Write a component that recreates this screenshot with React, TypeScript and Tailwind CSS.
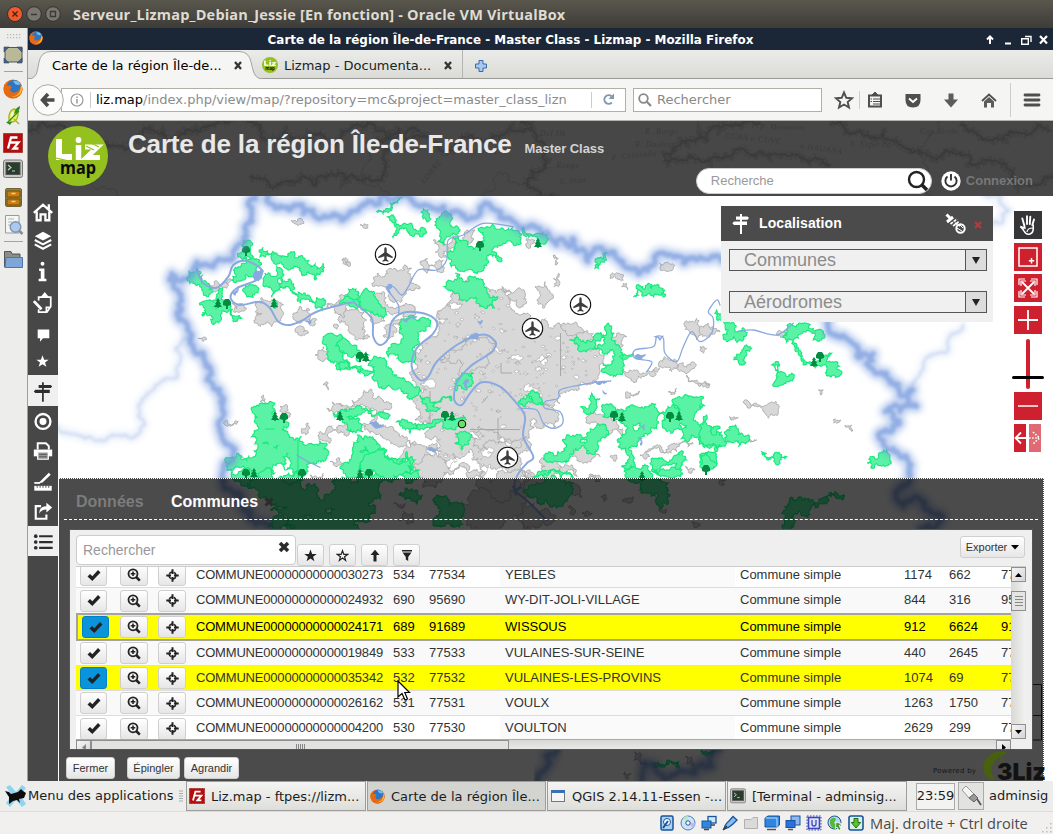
import React from "react";

type P = [number, number];
type Origin = { x: number; y: number; sx: number; sy: number };

const ORIGINS: Record<string, Origin> = {
  A: { x: 0, y: 190, sx: 3, sy: 3 },
  B: { x: 340, y: 190, sx: 3, sy: 3 },
  C: { x: 700, y: 190, sx: 3, sy: 3 },
  D: { x: 0, y: 470, sx: 2.958, sy: 3 },
  E: { x: 523, y: 470, sx: 2.958, sy: 3 },
  F: { x: 523, y: 630, sx: 2.958, sy: 3 },
};

function parse(src: string): P[] {
  let o = ORIGINS.A;
  const out: P[] = [];
  src.trim().split(/\s+/).forEach((t) => {
    if (ORIGINS[t]) {
      o = ORIGINS[t];
      return;
    }
    const [a, b] = t.split(",").map(Number);
    out.push([o.x + a / o.sx, o.y + b / o.sy]);
  });
  return out;
}

function rng(seed: number) {
  let s = seed * 7919 + 17;
  return () => {
    s = (s * 16807) % 2147483647;
    return s / 2147483647;
  };
}

function rough(src: string | P[], seed: number, amp = 0.3, closed = true): string {
  const pts = typeof src === "string" ? parse(src) : src;
  const r = rng(seed + 1);
  const out: P[] = [];
  const sub = (a: P, b: P) => {
    const dx = b[0] - a[0];
    const dy = b[1] - a[1];
    const len = Math.hypot(dx, dy);
    if (len < 2) {
      out.push(b);
      return;
    }
    const d = (r() - 0.5) * 2 * amp;
    const m: P = [(a[0] + b[0]) / 2 - dy * d, (a[1] + b[1]) / 2 + dx * d];
    sub(a, m);
    sub(m, b);
  };
  out.push(pts[0]);
  const n = closed ? pts.length : pts.length - 1;
  for (let i = 0; i < n; i++) sub(pts[i], pts[(i + 1) % pts.length]);
  return "M" + out.map((p) => p[0].toFixed(1) + " " + p[1].toFixed(1)).join("L") + (closed ? "Z" : "");
}

function smooth(src: string): string {
  const p = parse(src);
  let d = `M${p[0][0]} ${p[0][1]}`;
  for (let i = 0; i < p.length - 1; i++) {
    const a = p[Math.max(0, i - 1)];
    const b = p[i];
    const c = p[i + 1];
    const e = p[Math.min(p.length - 1, i + 2)];
    d += `C${(b[0] + (c[0] - a[0]) / 6).toFixed(1)} ${(b[1] + (c[1] - a[1]) / 6).toFixed(1)} ${(c[0] - (e[0] - b[0]) / 6).toFixed(1)} ${(c[1] - (e[1] - b[1]) / 6).toFixed(1)} ${c[0].toFixed(1)} ${c[1].toFixed(1)}`;
  }
  return d;
}

const FORESTS = [
  "A 715,190 725,165 745,150 750,185 760,200 725,205",
  "A 778,180 790,172 830,190 870,190 915,205 930,225 970,220 970,245 945,270 925,245 905,255 880,235 850,225 815,210 780,200",
  "A 695,270 700,240 730,220 780,228 770,260 730,270 705,278",
  "A 790,265 810,250 825,260 830,230 835,280 840,300 815,322 795,290",
  "A 730,305 755,285 775,300 760,322",
  "A 845,265 880,290 905,315 970,325 975,345 950,355 900,340 885,310 850,295",
  "A 560,268 590,235 605,280 640,305 625,320 605,300 585,280",
  "A 600,345 640,335 655,300 668,300 670,330 690,345 690,370 725,385 700,395 665,365 655,398 630,375 605,375 615,355",
  "A 820,350 825,330 832,340 832,352",
  "A 970,440 990,430 1030,460 1050,470 1050,490 1020,480 1050,520 1050,535 1010,515 985,500",
  "A 755,660 800,640 825,640 815,670 835,690 860,680 865,710 845,720 880,745 905,740 940,765 980,760 985,790 950,815 920,825 920,850 900,880 740,880 740,860 680,840 715,790 740,810 760,800 755,740 770,720 765,690",
  "A 1000,670 1040,660 1050,690 1020,685",
  "B 140,80 160,75 165,95 195,100 215,100 220,115 258,130 230,132 195,115 180,115 160,145 165,110",
  "B 285,95 305,70 335,80 345,110 355,130 325,140 315,165 300,130",
  "B 250,55 265,60 265,95",
  "B 110,65 150,38 185,22 155,48",
  "B 325,185 345,175 340,145 355,138 385,155 400,180 420,170 415,120 440,110 500,120 535,122 545,135 520,165 490,160 455,180 485,205 480,215 440,200 420,245 385,240 335,210",
  "B 545,115 590,130 620,155 590,165 555,130",
  "B 320,275 345,250 395,260 430,275 440,300 470,320 465,355 430,350 400,325 350,310",
  "B 25,310 55,305 60,320 90,305 115,340 140,375 130,385 90,365 60,325 25,330",
  "B 0,335 35,325 60,345 0,345",
  "B 180,405 200,385 250,382 268,390 262,410 235,440 215,515 195,515 145,500 145,480 160,460",
  "B 0,450 30,460 50,480 85,495 60,515 20,490 0,485",
  "B 0,515 40,530 70,550 95,550 90,515 115,505 155,540 170,555 200,575 235,590 235,615 200,610 165,600 125,590 100,570 60,550 0,535",
  "B 345,590 360,560 400,550 395,570 380,600 350,602",
  "B 240,615 270,635 330,618 335,632 280,640 300,655 265,665",
  "B 0,665 80,655 130,665 145,685 90,670 60,675 20,680 60,700 70,725 20,700 0,690",
  "B 170,695 250,700 310,690 345,690 370,675 380,690 360,710 310,705 270,715 210,730",
  "B 345,730 370,725 390,750 365,780 345,760",
  "B 35,800 40,770 90,740 110,755 140,780 130,800 200,785 225,810 220,835 180,830 190,850 240,865 160,860 140,820 100,800 80,815 60,835 90,865 20,865 0,835 25,820",
  "B 535,635 570,610 605,625 605,645 575,635 555,650",
  "B 880,320 890,285 925,280 935,295 975,300 975,320 930,310 895,300",
  "B 690,450 710,440 770,430 800,425 805,400 822,430 815,450 845,480 880,490 850,510 850,530 820,560 785,545 790,520 815,515 810,480 765,475 795,460 790,435 710,460",
  "B 765,235 765,210 800,190 800,210 775,235",
  "B 720,650 755,610 780,625 760,670 730,665",
  "B 615,810 625,790 680,770 680,735 740,730 800,715 805,735 775,765 740,790 700,780 650,815",
  "B 785,660 820,650 830,665 850,665 890,650 920,650 935,640 960,670 955,700 930,730 905,740 890,770 865,775 880,810 885,840 865,855 845,830 835,770 850,700 820,690 790,680",
  "B 955,675 1020,665 1015,620 1040,615 1090,625 1075,660 1060,690 1085,720 1140,715 1140,770 1100,770 1080,740 1055,735 1040,755 1000,725 970,715",
  "B 870,830 885,850 920,865 860,865",
  "B 930,820 980,815 1030,785 1040,810 1015,845 1010,820 970,825 950,850",
  "B 1080,820 1090,790 1130,800 1130,825 1100,840",
  "B 580,865 600,855 680,845 700,865",
  "C 50,360 75,385 100,395 105,420 140,435 130,450 70,440 85,420",
  "C 100,510 130,475 155,475 135,500 120,525",
  "C 215,525 235,515 245,545 275,550 245,585 222,590 235,560",
  "C 245,440 270,400 320,400 345,425 375,440 340,450 310,425 285,445 305,495 375,495 395,490 380,515 425,550 400,555 370,525 345,535 310,525 290,485 280,450",
  "C 0,710 20,675 20,705 65,725 80,760 50,785 10,760 0,750",
  "C 75,725 95,710 145,735 145,755 115,770 90,755",
  "C 0,795 20,790 50,820 20,840 0,830",
  "C 185,785 220,795 260,800 240,820 200,805",
  "C 510,800 535,795 550,780 570,805 550,825 515,835",
  "D 680,0 720,-5 880,0 895,30 870,70 830,95 790,80 740,55 700,35",
  "D 740,30 850,40 900,60 960,90 1040,40 1090,15 1180,30 1120,60 1090,100 1110,130 1060,150 1060,182 820,182 850,140 800,120 850,110 760,60",
  "D 1280,90 1330,105 1370,110 1365,140 1310,170 1280,165 1300,130",
  "D 1180,75 1230,60 1250,75 1200,90",
  "D 800,150 840,140 870,182 810,182",
  "D 1060,0 1240,0 1130,18 1080,20",
  "E 0,65 50,40 60,20 110,25 150,40 135,80 100,115 70,90 30,85",
  "E 300,0 370,0 410,30 430,60 430,100 405,115 395,70 350,40 330,40",
  "E 380,0 470,0 465,20 400,15",
  "E 765,130 775,110 860,105 950,75 945,90 850,135 795,140 800,165 770,178",
  "F 380,400 460,395 460,415 400,410",
  "F 525,360 575,360 540,380",
];

const GLADES = ["B 880,705 900,700 895,720 880,715", "B 1020,700 1040,705 1030,715", "A 790,760 800,755 805,765", "A 850,800 865,790 870,830 858,840", "B 180,820 200,800 195,815", "B 60,785 75,770 85,785", "A 820,770 835,765 830,775", "C 225,530 235,525 235,540", "B 565,625 575,620 580,632", "A 640,350 650,348 648,358", "B 720,755 740,748 735,760", "B 840,500 850,495 848,508", "D 960,120 990,115 980,130", "D 900,140 920,135 915,148"];

const TOWNS = [
  "B 330,320 400,310 440,290 500,300 510,350 560,370 595,400 640,415 720,420 760,430 790,520 760,580 720,580 690,600 660,640 610,640 640,715 590,715 575,690 570,780 540,830 560,865 430,865 420,820 340,790 330,830 295,820 300,770 270,700 225,690 225,640 260,600 215,560 215,500 280,440 290,390 315,350",
  "B 150,235 180,240 215,235 210,270 240,290 190,320 150,330 140,300 95,280 100,262 130,260",
  "B 100,315 130,305 175,345 215,345 225,355 180,370 110,400 95,360",
  "B 0,370 50,350 80,390 90,440 70,450 0,400",
  "B 160,390 185,385 160,440 150,445",
  "B 395,445 440,440 460,460 440,500 400,540 380,560 360,510 300,510 330,480",
  "B 240,215 310,210 310,240 260,250",
  "B 300,150 355,140 355,170 320,200 280,150",
  "B 585,290 615,275 625,300 630,330 610,355 600,320",
  "B 640,265 655,250 655,290 642,290",
  "B 640,195 655,205 645,225",
  "B 810,265 835,250 850,270",
  "B 845,290 860,280 862,300",
  "B 960,220 1000,235 975,240",
  "B 10,205 30,220 20,225",
  "B 60,105 85,105 75,115",
  "B 330,285 400,280 415,310 365,320",
  "B 660,410 700,400 735,425 710,440 680,430",
  "B 800,430 860,440 850,465 820,455",
  "B 790,545 870,540 930,545 960,535 940,560 890,575 860,560",
  "B 955,525 975,500 1000,510 1015,530 975,530",
  "B 1035,395 1070,385 1120,410 1090,430 1070,450 1045,420",
  "B 1040,555 1060,575 1110,585 1080,590 1045,575",
  "B 1015,525 1060,515 1065,530 1030,545",
  "B 985,605 1010,595 1005,612",
  "B 860,605 900,605 870,625",
  "B 0,640 60,625 130,630 155,650 100,655 40,650 0,670",
  "B 70,700 150,710 200,740 240,770 290,760 290,790 240,780 200,755 140,750 90,730",
  "B 180,800 290,800 330,820 320,850 250,865 190,845",
  "B 390,730 450,720 500,750 560,740 520,775 480,740 440,780 400,770",
  "B 700,755 770,770 780,800 740,820 700,800",
  "B 740,680 830,700 850,740 780,730 740,700",
  "B 740,870 760,860 780,875",
  "B 900,795 960,780 1010,760 1040,735 1060,760 1010,785 930,800",
  "B 810,800 830,795 825,815",
  "B 1035,830 1065,840 1050,850",
  "B 560,145 585,150 570,175",
  "B 375,125 405,120 400,145 375,160",
  "B 485,290 545,300 560,335 510,325",
  "A 873,92 900,85 912,100 885,102",
  "A 1025,210 1050,215 1048,230",
  "A 610,255 620,285 665,285 690,265 680,295 640,300 610,280",
  "A 695,340 730,345 740,355 700,365",
  "A 765,345 810,335 845,360 845,380 815,410 770,400 785,370",
  "A 885,370 925,355 930,375 885,390",
  "A 885,425 910,410 925,430 895,435",
  "A 925,395 950,390 945,405",
  "A 1000,345 1050,325 1045,345 1030,385 1005,370 980,350",
  "A 1000,405 1015,405 1010,418",
  "A 945,495 970,470 985,490 955,508",
  "A 595,445 620,445 610,455",
  "A 970,585 980,575 985,600",
  "A 780,635 790,615 797,638",
  "A 840,650 855,645 870,680 850,670",
  "A 670,698 715,695 710,703 675,705",
  "A 905,715 925,700 925,725 905,730",
  "A 990,815 1020,805 1030,820 1000,825",
  "A 955,735 980,715 1010,720 985,730 990,760 965,750",
  "A 930,855 970,850 965,868 935,865",
  "A 1010,715 1048,725 1040,740 1015,730",
  "A 980,655 1020,645 1045,650 1015,675",
  "C 0,410 45,415 60,425 20,440 0,430",
  "C 230,435 255,420 280,430 265,455",
  "C 0,470 20,475 10,490",
  "C 0,580 30,585 10,592",
  "C 132,632 160,645 200,645 215,635 235,665 205,685 185,655 150,655",
  "C 88,680 115,683 100,690",
  "C 355,600 370,600 362,615",
  "C 400,690 422,690 410,700",
  "C 435,705 455,705 455,725",
  "C 140,740 170,750 150,757",
  "C 60,870 78,870 70,888",
  "D 1350,100 1400,60 1460,45 1568,30 1568,178 1400,178 1370,140",
  "D 1165,100 1200,100 1190,112",
  "D 905,90 935,75 950,100 920,125",
  "D 1180,150 1220,130 1220,160",
  "D 1220,10 1350,0 1568,0 1568,50 1450,40 1300,35",
  "E 0,0 150,0 160,20 70,30 60,60 0,60",
  "E 0,110 60,120 90,135 50,170 0,175",
  "E 135,40 170,60 175,80 150,75",
  "E 175,125 205,130 190,140",
  "E 230,80 245,75 240,95",
  "E 295,95 325,80 325,90",
  "E 140,105 155,120 145,135",
  "E 500,155 525,160 515,172",
  "E 195,15 225,15 220,35",
  "E 405,110 425,120 415,130",
  "F 330,365 350,370 365,400 350,405",
  "F 480,380 500,380 505,405",
  "F 300,425 320,430 310,448",
];

const RIVERS = [
  "A 590,240 610,280 650,293 685,260 700,225 740,213 785,240 770,270 710,295 692,325 720,345 780,335 810,355 835,395 870,405 910,390 950,365 1050,338 B 50,345 95,385 100,440 120,465 145,445 155,395 190,368 250,370 290,395 280,430 230,475 215,530 240,570 265,560 290,515 350,465 400,440 440,435 468,460 450,490 390,530 350,580 343,630 365,645 390,610 425,577 480,590 530,640 555,680 550,740 580,800 560,820 530,860 525,900 E 10,90 70,150",
];
const STREAMS = [
  "B 175,375 175,345 145,300 160,290 185,315 205,290 235,240 290,240 320,210 325,150 370,135 430,100 520,110",
  "B 545,655 590,660 610,700 640,715 668,700 660,665 615,655 615,635 655,625 660,600 720,585 780,575 812,573",
  "B 920,545 935,515 885,505 885,480 940,470 950,440 970,445 975,490 1010,515 1030,470 1055,425 1080,455 1115,430 1120,385 1105,365 1130,330 1140,345",
  "C 115,425 160,420 230,435 280,400",
  "A 890,795 925,815 960,832",
];
const PONDS = ["B 140,290 155,285 150,310", "B 370,580 385,570 380,595", "B 390,440 415,435 410,448", "B 190,390 230,380 200,395", "B 90,700 130,705 100,708", "B 265,775 290,780 270,782", "B 905,710 912,705 912,720", "B 898,745 905,745 903,765", "B 885,498 915,495 905,505", "B 765,575 800,575 780,583", "A 700,310 715,295 705,315", "A 920,395 930,390 928,402", "B 415,395 428,392 420,405", "B 945,440 970,437 960,450", "B 790,605 800,610 795,612", "D 1515,50 1540,45 1525,75", "A 760,260 788,240 775,272"];

const BORDERS = [
  "A 765,10 755,60 745,100 740,135 715,165 700,195 680,210 650,215 620,225 590,215 575,245 550,265 515,250 508,270 530,300 545,330 530,370 560,400 575,440 580,470 610,490 630,530 620,570 660,600 665,650 655,700 665,740 705,775 700,800 670,830 665,860 D 665,30 690,70 715,110 745,150 800,170",
  "A 800,10 845,50 890,45 940,60 990,80 1050,65 B 60,50 110,45 180,20 220,35 280,55 330,75 380,90 400,85 420,50 440,40 460,55 480,85 520,95 570,105 620,125 650,165 690,170 700,145 720,180 745,215 790,185 830,205 860,235 900,250 940,225 975,190 1030,220 1080,200 1140,205 C 180,160 300,150 385,395 395,430 440,445 470,495 520,490 525,550 570,580 600,610 640,600 650,650 600,665 555,665 600,700 555,720 545,750 580,775 620,800 625,850 E 1145,30 1110,60 1125,110 1190,100 1240,145 1200,165 1170,180",
  "F 110,360 60,420 50,460",
  "F 590,360 560,410 510,430 470,420 440,435 400,430 355,400 350,460",
];
const FAINT = [
  "A 175,705 200,730 260,745 320,750 390,745 435,705 415,650 440,610 480,580 530,565 540,520 525,480 545,455 575,450",
  "C 850,10 930,60 900,100 860,120 780,150",
  "C 790,400 760,430 735,490 690,500 660,550 640,590",
];

const TREES: P[] = [[218, 303], [227, 304], [275, 416], [284, 418], [340, 416], [360, 357], [366, 357], [445, 416], [452, 416], [614, 416], [622, 417], [670, 417], [679, 416], [246, 474], [254, 473], [302, 474], [360, 474], [369, 474], [642, 476], [480, 246], [538, 243], [820, 357], [814, 362], [246, 251], [274, 303], [706, 470]];
const PLANES: P[] = [[385.5, 254.5], [580.5, 304.5], [532.5, 328.5], [507.5, 457.5]];

const urbanHoles = (() => {
  const r = rng(42);
  const out: string[] = [];
  for (let i = 0; i < 330; i++) {
    const x = 412 + r() * 188;
    const y = 292 + r() * 185;
    const s = 0.5 + r() * r() * 2.6;
    out.push(rough([[x - s, y], [x, y - s * 0.8], [x + s * 1.4, y], [x, y + s * 0.7]], i, 0.4));
  }
  const big: P[] = [[497, 350], [515, 358], [540, 362], [428, 384], [470, 338], [590, 345], [476, 436], [506, 442], [488, 470], [532, 388], [596, 400], [546, 436], [455, 305], [440, 320], [486, 452], [452, 462]];
  big.forEach((b, i) => out.push(rough([[b[0] - 8, b[1]], [b[0] - 2, b[1] - 3], [b[0] + 8, b[1] - 1], [b[0] + 4, b[1] + 4]], i + 300, 0.4)));
  return out.join("");
})();

function MapCanvas() {
  return (
    <svg className="absolute inset-0" width="995" height="585" viewBox="58 196 995 585">
      <defs>
        <filter id="soft" x="-10%" y="-10%" width="120%" height="120%"><feGaussianBlur stdDeviation="3.4" /></filter>
        <filter id="soft1" x="-10%" y="-10%" width="120%" height="120%"><feGaussianBlur stdDeviation="1.5" /></filter>
        <clipPath id="urban"><path d={rough(TOWNS[0], 5, 0.42)} /></clipPath>
      </defs>
      <rect x="58" y="196" width="995" height="585" fill="#fff" />
      <g fill="#d8d8d8" stroke="#acacac" strokeWidth="0.9">
        {TOWNS.map((t, i) => <path key={i} d={rough(t, i + 5, 0.42)} />)}
      </g>
      <path d={urbanHoles} fill="#fff" stroke="#acacac" strokeWidth="0.7" clipPath="url(#urban)" />
      <path d="M560.500 333V376M430 391V425M470 429.500H520M501 363V373H512M498 418V440M482 403L488 396M540 362L550 355" stroke="#a8a8a8" strokeWidth="1" fill="none" />
      <g fill="#5af3a5" stroke="#14ea7c" strokeWidth="1.1">
        {FORESTS.map((t, i) => <path key={i} d={rough(t, i + 77, 0.42)} />)}
        {GLADES.map((t, i) => <path key={i} d={rough(t, i + 9, 0.4)} fill="#fff" />)}
        <path d="M298 440V478M265 429H275" fill="none" />
      </g>
      <g fill="none" stroke="#8aa9e0" strokeLinecap="round">
        {RIVERS.map((t, i) => <path key={i} d={smooth(t)} strokeWidth="2" />)}
        {STREAMS.map((t, i) => <path key={i} d={smooth(t)} strokeWidth="1.3" />)}
        {PONDS.map((t, i) => <path key={i} d={rough(t, i, 0.3)} fill="#8aa9e0" strokeWidth="1.2" />)}
      </g>
      {TREES.map((t, i) => (
        <path key={i} fill="#038c41" transform={`translate(${t[0]} ${t[1]})`} d={i % 2 ? "M-1 5V2L-4 1L-4-2L-2-5L2-5L4-2L4 1L1 2V5Z" : "M0-5L2-2H1L3 1H2L4 4H.7V5H-.7V4H-4L-2 1H-3L-1-2H-2Z"} />
      ))}
      <g fill="none" stroke="#7398dd" strokeLinejoin="round">
        {BORDERS.map((t, i) => <path key={i} d={rough(t, i + 11, 0.4, false)} strokeWidth="12" opacity="0.45" filter="url(#soft)" />)}
        {BORDERS.map((t, i) => <path key={i} d={rough(t, i + 11, 0.4, false)} strokeWidth="4.500" opacity="0.6" filter="url(#soft1)" />)}
        {FAINT.map((t, i) => <path key={i} d={rough(t, i + 31, 0.3, false)} strokeWidth="7" opacity="0.16" filter="url(#soft)" />)}
        {FAINT.map((t, i) => <path key={i} d={rough(t, i + 31, 0.3, false)} strokeWidth="1.800" opacity="0.3" filter="url(#soft1)" />)}
      </g>
      {PLANES.map((p, i) => (
        <g key={i} transform={`translate(${p[0]} ${p[1]})`}>
          <circle r="10.200" fill="#fff" stroke="#111" strokeWidth="1.1" />
          <path fill="#3c3c3c" d="M0-7.200C1-7.200 1.200-6 1.200-5V-2L7.200 2.200V3.800L1.200 1.800V4.800L3 6.200V7.300L0 6.500L-3 7.300V6.200L-1.200 4.800V1.800L-7.200 3.800V2.200L-1.200-2V-5C-1.200-6-1-7.200 0-7.200Z" />
        </g>
      ))}
      <circle cx="462" cy="424" r="3.700" fill="#6be25f" stroke="#111" strokeWidth="1.1" />
      <path d="M1010 684.500H1041.500V740H1010M1010 715.500H1041" stroke="#333" fill="none" />
    </svg>
  );
}

function Logo3Liz() {
  return (
    <svg width="115" height="31" viewBox="931 750 115 31">
      <path d="M996 752C985 756 980 766 985 774C988 779 992 781 995 780C990 773 990 764 998 758C1003 754 1008 755 1006 751Z" fill="#48600f" />
      <path d="M993 757L999 755M994 761L990 757M1000 757L1003 761" stroke="#48600f" strokeWidth="1.500" />
      <text x="997" y="780" fontFamily="Inter" fontWeight="900" fontSize="23" fill="#121212" textLength="49" lengthAdjust="spacingAndGlyphs">3Liz</text>
      <text x="933" y="773" fontFamily="DejaVu Sans" fontSize="7" fill="#161616" textLength="43">Powered by</text>
    </svg>
  );
}

function HeaderTexture() {
  const curves: P[][] = [
    [[28, 130], [60, 124], [95, 140], [150, 128], [200, 132], [250, 122], [300, 140], [350, 128], [420, 130]],
    [[250, 178], [270, 186], [300, 178], [330, 174], [360, 180], [385, 166], [390, 150], [375, 140], [400, 128], [430, 140], [450, 150], [480, 142], [530, 128]],
    [[520, 122], [545, 150], [530, 170], [560, 196]],
    [[663, 156], [690, 140], [720, 128], [760, 122]],
    [[664, 160], [700, 160], [740, 148], [760, 150], [800, 158], [830, 166]],
    [[830, 124], [860, 130], [890, 140], [905, 148], [930, 156], [960, 152], [990, 160], [1010, 170], [1053, 176]],
    [[960, 124], [1000, 140], [1050, 132]],
    [[80, 130], [120, 196]], [[360, 130], [390, 196]], [[940, 121], [940, 196]],
    [[480, 196], [500, 172], [540, 180]],
  ];
  const notes: [number, number, string, number][] = [[540, 136, "Del Ilk", 0], [645, 134, "R. Burgo", 0], [635, 147, "R. Doultas", 0], [725, 138, "CUBA o CUVE", 6], [800, 148, "o HAUANA", 8], [612, 160, "P. Colorada", -6], [545, 168, "C. Rouge", 0], [560, 184, "S. Iean", -4], [850, 146, "S. Esperito", 2], [760, 130, "P. Matanzas", 0], [920, 134, "Cap Verde", 0], [454, 152, "aux Antienes", 2], [424, 184, "LORNE", -50]];
  return (
    <svg className="absolute inset-0" width="1025" height="75" viewBox="28 121 1025 75">
      <g fill="none" stroke="#3a3a3a">
        {curves.map((c, i) => <path key={i} d={rough(c, i + 3, 0.35, false)} strokeWidth={i > 6 ? 0.7 : 2} opacity="0.8" />)}
        {curves.slice(0, 7).map((c, i) => <path key={i} d={rough(c, i + 3, 0.35, false)} strokeWidth="8" strokeDasharray="1 1.800" opacity="0.45" />)}
      </g>
      <g fill="#383838" fontFamily="Liberation Serif" fontStyle="italic" fontSize="8" opacity="0.8">
        {notes.map((n, i) => <text key={i} x={n[0]} y={n[1]} transform={`rotate(${n[3]} ${n[0]} ${n[1]})`} letterSpacing="0.6">{n[2]}</text>)}
      </g>
    </svg>
  );
}

function LizLogo({ size }: { size: number }) {
  return (
    <svg width={size} height={size} viewBox="0 0 60 60" className="shrink-0">
      <circle cx="30" cy="30" r="30" fill="#95c11f" />
      <g fill="none" stroke="#fff">
        <path d="M11 13V31H24" strokeWidth="6" />
        <path d="M30.500 19V34" strokeWidth="5.500" />
        <path d="M37 21H49.500L38.500 31.500H52" strokeWidth="5" />
      </g>
      <circle cx="30.500" cy="14" r="2.900" fill="#fff" />
      <path d="M8 32Q20 35 28 36M38 20L46 24M43 17L51 21" stroke="#95c11f" strokeWidth="1.200" fill="none" />
      <text x="12" y="47.500" fontFamily="Noto Sans" fontWeight="bold" fontSize="18" fill="#0b0b0b" textLength="36" lengthAdjust="spacingAndGlyphs">map</text>
    </svg>
  );
}

function Firefox({ size }: { size: number }) {
  return (
    <svg width={size} height={size} viewBox="0 0 20 20" className="shrink-0">
      <circle cx="10" cy="10" r="9.500" fill="#e8681a" />
      <circle cx="11" cy="8.500" r="7.500" fill="#2c76c4" />
      <path d="M10 2Q15 1 17.500 5Q15 7 12 5Z" fill="#6fc0ee" />
      <path d="M1.500 5Q3.500 7 7 6.500L9 8.500Q6 10 8 12.500Q11 15 15 12Q18 10 17.500 5Q21 9 18.500 14Q15 19.800 9 19.300Q2 18.500 .8 12Q.2 8 1.500 5Z" fill="#e66a12" />
      <path d="M18 6Q20.500 10 17.500 14.500Q14 18.500 9 17.500Q15 17 17 12Q18 9 18 6Z" fill="#fdc12e" />
    </svg>
  );
}

function Filezilla({ size }: { size: number }) {
  return (
    <svg width={size} height={size} viewBox="0 0 20 20" className="shrink-0">
      <rect x="0.500" y="0.500" width="19" height="19" fill="#b30d0d" stroke="#8a0606" strokeDasharray="1 1" />
      <path d="M5 15.500L8 4.500H14.500M6.500 9.500H11.500M10.500 9.500H15.500L10.500 15.500H15.500" stroke="#fff" strokeWidth="2.300" fill="none" />
    </svg>
  );
}

function TermIcon({ size }: { size: number }) {
  return (
    <svg width={size} height={size} viewBox="0 0 20 20" className="shrink-0">
      <rect x="0.500" y="1" width="19" height="17.500" rx="2" fill="#c9cac6" stroke="#777" />
      <rect x="3" y="3.500" width="14" height="12" fill="#2a3c2c" stroke="#555" />
      <path d="M5 6L8 8.500L5 11M9 12H12" stroke="#b8d8b8" strokeWidth="1.200" fill="none" />
    </svg>
  );
}

function Launcher() {
  return (
    <div className="flex h-[753px] w-[28px] shrink-0 flex-col items-center border-r border-[#a0a098] bg-[#ededeb] pr-px">
      <svg width="26" height="250" viewBox="0 28 26 250">
        <g fill="#bcbcba">{[7, 10, 13, 16, 19].map((x) => [34, 37].map((y) => <rect key={x + "-" + y} x={x} y={y} width="1.300" height="1.300" />))}</g>
        <path d="M5 47.500H22V62H5Z" fill="#b9b998" stroke="#555" />
        <path d="M4 47H9L4 52ZM22 47H17L22 52ZM4 63H9L4 58ZM22 63H17L22 58Z" fill="#47618c" stroke="#2f4569" strokeWidth="0.600" />
        <path d="M4 71.500H23M4 241.500H23" stroke="#a3a3a0" />
        <g transform="translate(9 109)"><path d="M5 0Q10 1 9 6Q8 13 3 13Q-1 12 0 7Q1 1 5 0ZM5 10L10 15" fill="#e3ef5a" stroke="#a2b52a" strokeWidth="1.300" /><path d="M4 3Q2 6 3 9" stroke="#fbfbd5" strokeWidth="2" fill="none" /><path d="M-2 14L10 2" stroke="#2f8f1f" strokeWidth="1.300" /><path d="M5 5Q6-1 11-3Q11 3 5 5ZM-3 13L3 13L1 16Z" fill="#2f8f1f" /></g>
        <rect x="5.500" y="188.500" width="16" height="18" rx="1.500" fill="#8d8245" stroke="#6f6634" />
        <path d="M7 191H20V197H7ZM7 199H20V205H7Z" fill="#c97c12" stroke="#7d4c07" /><path d="M11.500 193.500H15.500M11.500 201.500H15.500" stroke="#fbd36a" strokeWidth="1.500" />
        <path d="M5.500 215.500H19V233H5.500Z" fill="#f6f6f4" stroke="#9a9a98" /><path d="M8 219H14M8 222H12M8 225H11" stroke="#b5b5b3" />
        <circle cx="15.500" cy="227" r="5.300" fill="#a9c9ee" stroke="#7e93ac" strokeWidth="1.400" /><path d="M19.500 231L22.500 234" stroke="#8c8c8c" strokeWidth="2.500" />
        <path d="M4.500 251.500H11L12 254H20V267H4.500Z" fill="#8b8d88" stroke="#555" /><path d="M6 257.500H22.500V267.500H5Z" fill="#7ea6d9" stroke="#4b76ae" />
      </svg>
      <div className="-mt-[199px] flex"><Firefox size={20} /></div>
      <div className="mt-[34px]"><Filezilla size={20} /></div>
      <div className="mt-[6px]"><TermIcon size={20} /></div>
    </div>
  );
}

const SIDE: { h: number; on?: boolean; svg: React.ReactNode }[] = [
  { h: 31, svg: <path d="M5.500 16.500L15 8L24.500 16.500M8.500 15V24H12.500V18H17.500V24H21.500V15M21 7.500V12.500" stroke="#fff" strokeWidth="2.400" fill="none" /> },
  { h: 30, svg: <g><path d="M15 5L23.500 9.500L15 14L6.500 9.500Z" fill="#fff" /><path d="M6.500 13.500L15 18L23.500 13.500M6.500 18L15 22.500L23.500 18" stroke="#fff" strokeWidth="2.200" fill="none" /></g> },
  { h: 30, svg: <g fill="#fff"><circle cx="14.500" cy="7" r="2" /><path d="M11 12H16.500V22.500H18.500V25H10.500V22.500H12.700V14.500H11Z" /></g> },
  { h: 31, svg: <g stroke="#fff" fill="none" strokeWidth="1.800" transform="translate(0 1)"><path d="M10.500 12V8.500H23V18L19 24H10.500V21M23 19H18.500V24" /><path d="M5.500 12.500L13.500 21" strokeWidth="2.800" /><path d="M13.500 8.500L16.800 4.500L20 8.500Z" fill="#fff" /></g> },
  { h: 30, svg: <path d="M9.500 12H21.500V21H15L12 24.500V21H9.500Z" fill="#fff" /> },
  { h: 27, svg: <path d="M14.500 8.500L16.200 13.200H20.800L17.100 16L18.500 20.500L14.500 17.800L10.500 20.500L11.900 16L8.200 13.200H12.800Z" fill="#fff" /> },
  { h: 31, on: true, svg: <g fill="#2e2e2e"><path d="M14 6.500H15.800V26.500H14Z" /><path d="M10.500 9.300H23L24.500 10.900L23 12.500H10.500ZM19.500 14.300H7L5.500 15.900L7 17.500H22V14.300Z" /></g> },
  { h: 30, svg: <g><circle cx="15" cy="16" r="7.700" stroke="#fff" strokeWidth="2.400" fill="none" /><circle cx="15" cy="16" r="3.600" fill="#fff" /></g> },
  { h: 30, svg: <g><path d="M9.500 14V7.500H18L21 10.500V14" stroke="#fff" strokeWidth="2" fill="none" /><path d="M5.500 14H24.500V21H5.500Z" fill="#fff" /><path d="M9.500 16.500H20.500V24H9.500Z" fill="#999" stroke="#fff" strokeWidth="1.200" /><path d="M11 19H19M11 21.500H19" stroke="#555" /></g> },
  { h: 30, svg: <g transform="translate(0 .5)"><path d="M12 15.500L21 6.500L23 8.500L14.500 16.500L9.500 17.500Z" fill="#fff" /><path d="M6 17H12" stroke="#fff" strokeWidth="1.800" /><path d="M6 20H24V25H6Z" fill="#fff" /><path d="M9 20V22M12 20V22M15 20V22M18 20V22M21 20V22" stroke="#474747" /></g> },
  { h: 30, svg: <g><path d="M13 10.500H7.500V23.500H18.500V19" stroke="#fff" strokeWidth="2.200" fill="none" /><path d="M11 18Q11 10.500 18.500 10.500V7L24.500 12L18.500 17V14Q13.500 14 11 18Z" fill="#fff" /></g> },
  { h: 30, on: true, svg: <g fill="#2e2e2e"><circle cx="7.500" cy="10.500" r="1.900" /><circle cx="7.500" cy="16.500" r="1.900" /><circle cx="7.500" cy="22.500" r="1.900" /><path d="M11 9.500H25V11.700H11ZM11 15.500H25V17.700H11ZM11 21.500H25V23.700H11Z" /></g> },
];

const ROWS = [
  ["COMMUNE00000000000030273", "534", "77534", "YEBLES", "1174", "662", "77"],
  ["COMMUNE00000000000024932", "690", "95690", "WY-DIT-JOLI-VILLAGE", "844", "316", "95"],
  ["COMMUNE00000000000024171", "689", "91689", "WISSOUS", "912", "6624", "91"],
  ["COMMUNE00000000000019849", "533", "77533", "VULAINES-SUR-SEINE", "440", "2645", "77"],
  ["COMMUNE00000000000035342", "532", "77532", "VULAINES-LES-PROVINS", "1074", "69", "77"],
  ["COMMUNE00000000000026162", "531", "77531", "VOULX", "1263", "1750", "77"],
  ["COMMUNE00000000000004200", "530", "77530", "VOULTON", "2629", "299", "77"],
];
const ROW_STYLE = [
  "h-[25px] bg-white text-[#333] border-b border-[#ddd]",
  "h-[25px] bg-[#f9f9f9] text-[#333]",
  "h-[28px] bg-[#ffff00] text-black border-2 border-[#a3a3a3] border-r-0",
  "h-[25px] bg-[#f9f9f9] text-[#333] border-b border-[#ddd]",
  "h-[25px] bg-[#ffff00] text-[#333] border-b border-[#ddd]",
  "h-[25px] bg-[#f9f9f9] text-[#333] border-b border-[#ddd]",
  "h-[25px] bg-white text-[#333]",
];

const BTN = "flex items-center justify-center rounded-[3px] border border-[#cfcfcf] bg-linear-to-b from-white to-[#e6e6e6]";

function RowIcon({ kind }: { kind: number }) {
  if (kind === 0) return <svg width="14" height="13" viewBox="0 0 14 13"><path d="M.5 7.500L3 5L5.300 7.300L11 1L13.500 3.500L5.300 12Z" fill="#222" /></svg>;
  if (kind === 1)
    return (
      <svg width="14" height="14" viewBox="0 0 14 14" fill="none" stroke="#222"><circle cx="6" cy="5.800" r="4.500" strokeWidth="1.800" /><path d="M9.200 9L12.800 12.600" strokeWidth="2.500" /><path d="M6 3.500V8.100M3.700 5.800H8.300" strokeWidth="1.600" /></svg>
    );
  return (
    <svg width="13" height="13" viewBox="0 0 13 13" fill="none" stroke="#222"><path d="M6.500 .3V5M6.500 8V12.700M.3 6.500H5M8 6.500H12.700" strokeWidth="2" /><circle cx="6.500" cy="6.500" r="3.500" strokeWidth="1.500" strokeDasharray="4 1.500" strokeDashoffset="-.8" /></svg>
  );
}

function AttributeTable() {
  return (
    <div className="h-[172px] w-[935px] overflow-hidden">
      <div className="-mt-[4px] flex flex-col text-[13px]">
        {ROWS.map((r, i) => {
          const sel = i === 2 || i === 4;
          const mark = i === 2;
          return (
            <div key={i} className={`grid w-[935px] shrink-0 grid-cols-[40px_38px_37px_197px_36px_76px_235px_164px_45px_52px_15px] items-stretch ${ROW_STYLE[i]}`}>
              <div className="flex items-center pl-[4px]">
                <div className={`${BTN} h-[22px] w-[27px] ${sel ? "border-[#0480be]! from-[#0a94dc]! to-[#0a94dc]!" : ""}`}><RowIcon kind={0} /></div>
              </div>
              <div className={`flex items-center ${mark ? "pl-[2px]" : "pl-[4px]"}`}><div className={`${BTN} h-[22px] w-[28px]`}><RowIcon kind={1} /></div></div>
              <div className={`flex items-center ${mark ? "pl-[2px]" : "pl-[4px]"}`}><div className={`${BTN} h-[22px] w-[28px]`}><RowIcon kind={2} /></div></div>
              {[r[0], r[1], r[2], r[3], "Commune simple", r[4], r[5], r[6]].map((c, k) => (
                <div key={k} className={`flex items-center overflow-visible whitespace-nowrap pb-px ${mark ? "pl-[3px]" : "pl-[5px]"} ${k === 0 ? "tracking-[-0.19px]" : ""} ${k === 3 && !sel ? "bg-[#fafafa]" : ""}`}>{c}</div>
              ))}
            </div>
          );
        })}
      </div>
    </div>
  );
}

const SCROLLBTN = "flex items-center justify-center border border-[#8f8f8f] bg-linear-to-br from-[#f5f5f5] to-[#d5d5d5] text-[8px] leading-none text-black";

function Dock() {
  return (
    <div className="absolute left-[1px] top-[282px] z-10 flex h-[303px] w-[985px] flex-col border-r border-t border-dotted border-white bg-[rgba(0,0,0,0.705)]">
      <div className="mx-[5px] flex h-[41px] items-center border-b border-dashed border-white pl-[12px] pt-[5px] text-[16px] font-bold">
        <span className="w-[95px] text-[#7c7c7c]">Données</span>
        <span className="text-white">Communes</span>
        <svg width="10" height="10" viewBox="0 0 10 10" className="ml-[6px]"><path d="M1.500 1.500L8.500 8.500M8.500 1.500L1.500 8.500" stroke="#2b2b2b" strokeWidth="3" /></svg>
      </div>
      <div className="ml-[10px] mt-[9px] flex h-[221px] w-[964px] flex-col overflow-hidden border border-[#555] bg-[#efefef]">
        <div className="flex h-[36px] shrink-0 pl-[6px]">
          <div className="mt-[5px] flex h-[30px] w-[220px] shrink-0 justify-between rounded-[4px] border border-[#ccc] bg-white pl-[6px] pr-[5px]">
            <span className="self-center text-[14px] text-[#999]">Rechercher</span>
            <svg width="12" height="12" viewBox="0 0 12 12" className="mt-[5px]"><path d="M2 2L10 10M10 2L2 10" stroke="#2b2b2b" strokeWidth="3.500" /></svg>
          </div>
          <div className="ml-[1px] mt-[14px] flex gap-[5px]">
            <div className={`${BTN} h-[22px] w-[27px]`}><svg width="13" height="13" viewBox="0 0 24 24"><path d="M12 1L15 9H23.500L16.800 14.200L19.200 22.500L12 17.600L4.800 22.500L7.200 14.200L.5 9H9Z" fill="#222" /></svg></div>
            <div className={`${BTN} h-[22px] w-[27px]`}><svg width="13" height="13" viewBox="0 0 24 24"><path d="M12 3L14.500 10H21.500L15.800 14.200L17.800 21L12 16.800L6.200 21L8.200 14.200L2.500 10H9.500Z" fill="none" stroke="#222" strokeWidth="2.200" /></svg></div>
            <div className={`${BTN} h-[22px] w-[27px]`}><svg width="12" height="13" viewBox="0 0 12 13"><path d="M6 .8L10.500 6H7.500V12.500H4.500V6H1.500Z" fill="#222" /></svg></div>
            <div className={`${BTN} h-[22px] w-[27px]`}><svg width="12" height="13" viewBox="0 0 12 13"><path d="M1 1H11V2.500H1ZM1.500 3.500H10.500L7.200 8V12L4.800 10.500V8Z" fill="#222" /></svg></div>
          </div>
          <div className={`${BTN} ml-auto mr-[7px] mt-[6px] h-[22px] w-[65px] gap-[4px] border-[#bbb] text-[11px] text-[#333]`}>Exporter <svg width="8" height="5"><path d="M0 0H8L4 4.500Z" fill="#000" /></svg></div>
        </div>
        <div className="ml-[6px] flex h-[173px] w-[950px] border-t border-[#ccc]">
          <AttributeTable />
          <div className="flex h-[172px] w-[15px] flex-col bg-linear-to-r from-[#d8d8d5] to-[#f2f2f2]">
            <div className={`${SCROLLBTN} h-[15px]`}><svg width="7" height="4"><path d="M0 4L3.500 0L7 4Z" /></svg></div>
            <div className="mt-[9px] flex h-[20px] flex-col items-center justify-center gap-[2px] border border-[#8f8f8f] bg-[#e4e4e2]">
              {[0, 1, 2, 3].map((k) => <div key={k} className="h-px w-[8px] bg-[#888]" />)}
            </div>
            <div className={`${SCROLLBTN} mt-auto h-[15px]`}><svg width="7" height="4"><path d="M0 0L3.500 4L7 0Z" /></svg></div>
          </div>
        </div>
        <div className="ml-[6px] flex h-[15px] w-[935px] shrink-0 border-t border-[#aaa] bg-linear-to-b from-[#d8d8d5] to-[#f2f2f2]">
          <div className={`${SCROLLBTN} w-[15px]`}><svg width="4" height="7"><path d="M4 0L0 3.500L4 7Z" fill="#888" /></svg></div>
          <div className="flex w-[418px] items-center justify-center gap-[1px] border border-[#8f8f8f] bg-[#e2e2e0]">
            {[0, 1, 2, 3, 4].map((k) => <div key={k} className="h-[7px] w-px bg-[#888]" />)}
          </div>
          <div className={`${SCROLLBTN} ml-auto w-[15px]`}><svg width="4" height="7"><path d="M0 0L4 3.500L0 7Z" /></svg></div>
        </div>
      </div>
      <div className="flex pl-[7px] pt-[7px] text-[11px] text-[#333]">
        <div className={`${BTN} h-[22px] w-[49px]`}>Fermer</div>
        <div className={`${BTN} ml-[12px] h-[22px] w-[53px]`}>Épingler</div>
        <div className={`${BTN} ml-[4px] h-[22px] w-[55px]`}>Agrandir</div>
      </div>
    </div>
  );
}

function Select({ label }: { label: string }) {
  return (
    <div className="flex h-[22px] w-[258px] border border-[#555] text-[18px] text-[#8c8c8c]">
      <span className="flex-1 pl-[14px] leading-[20px]">{label}</span>
      <span className="flex w-[21px] items-center justify-center border-l border-[#555] bg-[#dcdcdc]"><svg width="8" height="7"><path d="M0 0H8L4 7Z" fill="#222" /></svg></span>
    </div>
  );
}

function LocatePanel() {
  return (
    <div className="absolute left-[663px] top-[10px] w-[272px]">
      <div className="flex h-[35px] items-center bg-[#4b4b4b] pl-[11px]">
        <svg width="18" height="20" viewBox="0 0 18 20" fill="#fff"><path d="M8 0H10V20H8Z" /><path d="M4 2.500H15.500L17 4L15.500 5.800H4ZM14 7.500H2L.3 9.200L2 11H15V7.500Z" /></svg>
        <span className="ml-[9px] text-[14px] font-bold tracking-[0.1px] text-white">Localisation</span>
        <svg width="22" height="22" viewBox="0 0 22 22" className="ml-auto" fill="none" stroke="#fff"><path d="M1.500 1.500L5 5" strokeWidth="3" /><path d="M2 9L8 4" strokeWidth="3" /><path d="M5.500 11L12 6M8 13L14 8.500M10 10L15 13" strokeWidth="1.700" strokeDasharray="3 1" /><circle cx="15.500" cy="15.500" r="4.200" strokeWidth="2" /><path d="M12 15L17 18M15 12L18 15" /></svg>
        <svg width="8" height="8" viewBox="0 0 8 8" className="ml-[7px] mr-[11px] mt-[3px]"><path d="M1 1L7 7M7 1L1 7" stroke="#b23b3b" strokeWidth="2.300" /></svg>
      </div>
      <div className="flex h-[81px] flex-col gap-[20px] bg-[#f0f0f0] pl-[8px] pt-[8px]">
        <Select label="Communes" />
        <Select label="Aérodromes" />
      </div>
    </div>
  );
}

function NavBar() {
  const red = "flex h-[28px] w-[28px] items-center justify-center bg-[#ce202e]";
  return (
    <div className="absolute left-[952px] top-[15px] flex w-[34px] flex-col items-center pl-[1px]">
      <div className="flex h-[28px] w-[28px] items-center justify-center bg-[#363639]">
        <svg width="20" height="22" viewBox="0 0 20 22" fill="none" stroke="#fff" strokeWidth="1.900" strokeLinecap="round"><path d="M6.200 11L4.300 4.500M9 10V2.300M11.800 10L12.300 2.600M14.300 11L16 5.500" /><path d="M6.300 11L6.800 14L2.300 12.500Q5 14.500 6 17Q8 21 12 20Q16 19 15.200 11" strokeWidth="1.600" /><path d="M9 17.500Q10 14 14.500 14" strokeWidth="1.200" /></svg>
      </div>
      <div className={`${red} mt-[4px]`}><svg width="20" height="20" viewBox="0 0 20 20" fill="none" stroke="#fff"><path d="M1 1H19V19H1Z" strokeWidth="1.500" /><path d="M13.500 11V16.500M10.800 13.700H16.200" strokeWidth="1.500" /></svg></div>
      <div className={`${red} mt-[3px]`}><svg width="20" height="20" viewBox="0 0 20 20" fill="none" stroke="#fff" strokeWidth="1.800"><path d="M4 4L16 16M16 4L4 16" /><path d="M1 7V1H7M13 1H19V7M19 13V19H13M7 19H1V13M3 8V3H8M12 3H17V8M17 12V17H12M8 17H3V12" strokeWidth="1.200" /></svg></div>
      <div className={`${red} mt-[4px]`}><svg width="20" height="20"><path d="M10 0V20M0 10H20" stroke="#fff" strokeWidth="1.800" /></svg></div>
      <svg width="34" height="52" className="mt-[4px]"><rect x="15" y="1" width="4" height="50" rx="2" fill="#ce202e" /><rect x="1" y="38" width="32" height="3" rx="1.500" fill="#000" /></svg>
      <div className={`${red} mt-[2px]`}><svg width="20" height="20"><path d="M0 10H20" stroke="#fff" strokeWidth="1.500" /></svg></div>
      <div className="mt-[4px] flex w-[28px] gap-[3px]">
        <div className="flex h-[28px] w-[12px] items-center bg-[#ce202e]"><svg width="12" height="14"><path d="M7 1.500L1.500 7L7 12.500M1.500 7H12" fill="none" stroke="#fff" strokeWidth="1.800" /></svg></div>
        <div className="flex h-[28px] w-[12px] items-center bg-[#e06a73]"><svg width="12" height="14"><path d="M0 7H10M4 1L10.500 7L4 13" fill="none" stroke="#fff" strokeWidth="1.600" strokeDasharray="1.600 1.500" /></svg></div>
      </div>
    </div>
  );
}

function TitleBar() {
  return (
    <div className="flex h-[28px] items-center bg-linear-to-b from-[#5a574d] to-[#3d3c38] pl-[7px]">
      <svg width="56" height="18" viewBox="0 0 56 18">
        <circle cx="8" cy="9" r="7.500" fill="#ee5a2c" stroke="#33322e" /><path d="M5.500 6.500L10.500 11.500M10.500 6.500L5.500 11.500" stroke="#4a2015" strokeWidth="1.400" />
        <circle cx="27" cy="9" r="7.300" fill="#797770" stroke="#33322e" /><path d="M24 9.500H30" stroke="#3a3935" strokeWidth="1.500" />
        <circle cx="46" cy="9" r="7.300" fill="#797770" stroke="#33322e" /><path d="M43.500 6.500H48.500V11.500H43.500Z" fill="none" stroke="#3a3935" strokeWidth="1.300" />
      </svg>
      <span className="ml-[10px] mt-[2px] whitespace-nowrap font-['Open_Sans'] text-[14.500px] font-bold tracking-[0.19px] text-[#dfdbd2]">Serveur_Lizmap_Debian_Jessie [En fonction] - Oracle VM VirtualBox</span>
    </div>
  );
}

const DV = "font-['DejaVu_Sans']";

function BrowserChrome() {
  return (
    <div className={DV}>
      <div className="relative flex h-[22px] items-center justify-center bg-[#1b2637] pr-[3px] text-[11.940px] font-bold text-white">
        <div className="absolute left-[1px] top-[3px]"><Firefox size={14} /></div>
        <span className="mr-[57px] mt-[3px] whitespace-nowrap">Carte de la région Île-de-France - Master Class - Lizmap - Mozilla Firefox</span>
        <svg width="70" height="14" viewBox="983 33 70 14" className="absolute right-0 top-[4px]" fill="none" stroke="#fff" strokeWidth="2"><path d="M990 45V38M987 40.500L990 37.500L993 40.500" /><path d="M1005 44.500H1011" /><path d="M1021.700 39.700H1028.300V45.300H1021.700ZM1025 37.500H1031V43" strokeWidth="1.400" /><path d="M1040 37L1047 44.500M1047 37L1040 44.500" strokeWidth="2.200" /></svg>
      </div>
      <div className="flex h-[29px] border-b border-[#9a9a94] bg-linear-to-b from-[#ebebe9] to-[#dbdbd7] text-[13px] text-[#222]">
        <div className="relative flex h-[30px] w-[235px] shrink-0 items-center">
          <svg width="235" height="30" className="absolute inset-0"><path d="M0 29Q8 29 9.500 20L11 12Q13 1.500 23 1.500H211Q221 1.500 223 12L225 20Q227 29 235 29V30H0Z" fill="#f5f5f3" stroke="#a5a5a0" /><path d="M0 29.500H235" stroke="#f5f5f3" /></svg>
          <span className="relative ml-[24px] mt-[2px] whitespace-nowrap text-black">Carte de la région Île-de...</span>
          <svg width="8" height="9" viewBox="0 0 8 9" className="relative ml-auto mr-[21px] mt-px"><path d="M1 1L7 8M7 1L1 8" stroke="#333" strokeWidth="2.300" /></svg>
        </div>
        <div className="flex w-[200px] shrink-0 items-center border-r border-[#b5b5b0] pr-[10px] pt-[2px]">
          <div className="-ml-px"><LizLogo size={16} /></div>
          <span className="ml-[6px] mt-px whitespace-nowrap">Lizmap - Documenta...</span>
          <svg width="8" height="9" viewBox="0 0 8 9" className="ml-auto"><path d="M1 1L7 8M7 1L1 8" stroke="#333" strokeWidth="2.300" /></svg>
        </div>
        <svg width="12" height="12" viewBox="0 0 12 12" className="ml-[12px] mt-[10px]"><path d="M4 .5H8V4H11.500V8H8V11.500H4V8H.5V4H4Z" fill="#a9c8ee" stroke="#3a6aa8" /></svg>
      </div>
      <div className="relative flex h-[42px] items-center border-b border-[#b3b3ad] bg-[#f5f5f3] pl-[33px] text-[13px]">
        <div className="flex h-[24px] w-[565px] items-center border border-[#b0b0a8] bg-white">
          <svg width="14" height="14" viewBox="0 0 14 14" className="ml-[8px] shrink-0" fill="none" stroke="#999"><circle cx="7" cy="7" r="6" strokeWidth="1.200" /><path d="M7 6V10.500M7 3.500V5" strokeWidth="1.500" /></svg>
          <div className="ml-[6px] h-[16px] w-px bg-[#ccc]" />
          <span className="ml-[5px] w-[474px] whitespace-nowrap text-[#8b8b8b]"><span className="text-black">liz.map</span>/index.php/view/map/?repository=mc&amp;project=master_class_lizn</span>
          <div className="ml-auto h-[16px] w-px shrink-0 bg-[#ccc]" />
          <svg width="13" height="13" viewBox="0 0 13 13" className="ml-[10px] mr-[10px] shrink-0"><path d="M9.800 9.500A4.300 4.300 0 1 1 9.500 3.300" fill="none" stroke="#8298ab" strokeWidth="2" /><path d="M12 .5V6H6.500Z" fill="#8298ab" /></svg>
        </div>
        <svg width="32" height="32" viewBox="0 0 32 32" className="absolute left-[4px] top-[5px]"><circle cx="16" cy="16" r="15.300" fill="#fbfbfa" stroke="#a9a9a4" /><path d="M22.500 16H11M16 10L10.500 16L16 22" fill="none" stroke="#4b4b4b" strokeWidth="3.500" /></svg>
        <div className="ml-[7px] flex h-[24px] w-[189px] items-center border border-[#b0b0a8] bg-white pl-[4px] text-[#888]">
          <svg width="14" height="14" viewBox="0 0 14 14" fill="none" stroke="#888"><circle cx="5.500" cy="5.500" r="4.300" strokeWidth="1.800" /><path d="M8.800 8.800L13 13" strokeWidth="2.200" /></svg>
          <span className="ml-[5px]">Rechercher</span>
        </div>
        <svg width="225" height="40" viewBox="828 80 225 40" className="ml-[6px]" fill="none" stroke="#4f4f4f">
          <path d="M844 92.500L846.300 97.800L852 98.300L847.700 102L849 107.500L844 104.500L839 107.500L840.300 102L836 98.300L841.700 97.800Z" strokeWidth="1.900" />
          <path d="M859.500 91V109M1010.500 83V117" stroke="#ccc" />
          <path d="M869 95.500H881V106.500H869Z" strokeWidth="2" /><path d="M872 95L875 92L878 95Z" fill="#4f4f4f" /><path d="M873 99H880M873 101.500H880M873 104H880M870.500 99H872M870.500 101.500H872" strokeWidth="1.200" />
          <path d="M905.500 94H920.500V100Q920.500 107.500 913 107.500Q905.500 107.500 905.500 100Z" fill="#4f4f4f" stroke="none" /><path d="M909 98.500L913 102L917 98.500" stroke="#fff" strokeWidth="2" />
          <path d="M948.500 93.500H953.500V99.500H958L951 107.500L944 99.500H948.500Z" fill="#5c5c5c" stroke="none" />
          <path d="M982 101L989 94.500L996 101" strokeWidth="1.800" /><path d="M984 101.500L989 97L994 101.500V107.500H991V103H987V107.500H984Z" fill="#5c5c5c" stroke="none" />
          <path d="M1025 95H1039M1025 100H1039M1025 105H1039" strokeWidth="2.800" strokeLinecap="round" />
        </svg>
      </div>
    </div>
  );
}

function AppHeader() {
  return (
    <div className="relative h-[75px] overflow-hidden bg-[#474747]">
      <HeaderTexture />
      <div className="relative flex pl-[20px] pt-[5px]">
        <LizLogo size={60} />
        <div className="ml-[20px] flex items-baseline whitespace-nowrap font-bold">
          <span className="text-[26px] leading-[36px] tracking-[-0.16px] text-[#e8e8e8]">Carte de la région Île-de-France</span>
          <span className="ml-[13px] text-[13px] tracking-[-0.05px] text-[#d4d4d4]">Master Class</span>
        </div>
        <div className="ml-auto mr-[20px] mt-[42px] flex h-[26px] items-center">
          <div className="flex h-[26px] w-[236px] items-center justify-between rounded-full border border-[#ccc] bg-white pl-[14px] pr-[2px] text-[13px] text-[#999]">
            Recherche
            <svg width="22" height="22" viewBox="0 0 22 22" fill="none" stroke="#222"><circle cx="9.500" cy="9.500" r="7.500" strokeWidth="2.400" /><path d="M14.500 14.500L20 20" strokeWidth="3.600" /></svg>
          </div>
          <svg width="20" height="20" viewBox="0 0 20 20" className="ml-[9px]"><circle cx="10" cy="10" r="9.700" fill="#fff" /><path d="M6.500 5.500A5.600 5.600 0 1 0 13.500 5.500M10 3V9.500" fill="none" stroke="#333" strokeWidth="1.900" /></svg>
          <span className="ml-[5px] text-[13px] font-bold text-[#777]">Connexion</span>
        </div>
      </div>
    </div>
  );
}

function TaskButton({ w, icon, text, on }: { w: string; icon: React.ReactNode; text: string; on?: boolean }) {
  return (
    <div className={`flex h-[30px] shrink-0 items-center gap-[6px] overflow-hidden whitespace-nowrap border border-[#9c9c98] pl-[2px] ${w} ${on ? "bg-[#d3d3d0]" : "bg-linear-to-b from-[#f4f4f2] to-[#dededb]"}`}>
      {icon}
      <span className="mt-px">{text}</span>
    </div>
  );
}

function Taskbar() {
  return (
    <div className={`flex h-[31px] items-center border-b border-[#dcdcda] bg-[#ededeb] text-[13px] text-[#1c1c1c] ${DV}`}>
      <svg width="24" height="24" viewBox="0 0 24 24" className="ml-[4px] shrink-0"><path d="M2 3L6 1L12 8L18 1L22 4L16 11L22 20L18 23L12 16L6 23L2 19L8 11Z" fill="#8fd4ee" /><path d="M1 7L5 8L7 10L14 8L17 5L19 7L22 9L20 14L15 15L16 19L13 16L9 17L5 20L5 13Z" fill="#0d0d0d" /></svg>
      <span className="w-[150px] whitespace-nowrap">Menu des applications</span>
      <svg width="5" height="12" className="ml-px mr-[2px] shrink-0"><path d="M0 1H4M0 3.500H4M0 6H4M0 8.500H4M0 11H4" stroke="#aaa" /></svg>
      <div className="flex gap-px">
        <TaskButton w="w-[180px]" icon={<Filezilla size={16} />} text="Liz.map - ftpes://lizm..." />
        <TaskButton w="w-[179px]" on icon={<Firefox size={15} />} text="Carte de la région Île..." />
        <TaskButton w="w-[179px]" icon={<svg width="14" height="12" className="mx-px shrink-0"><rect x="0.500" y="0.500" width="13" height="11" fill="#f5f5f5" stroke="#777" /><rect x="0" y="0" width="14" height="3" fill="#3a6fb5" /></svg>} text="QGIS 2.14.11-Essen -..." />
        <TaskButton w="w-[180px]" icon={<TermIcon size={16} />} text="[Terminal - adminsig..." />
      </div>
      <div className="ml-[9px] flex h-[27px] w-[39px] shrink-0 items-center justify-center border border-[#aaa] bg-[#f3f3f1]">23:59</div>
      <div className="ml-[3px] flex h-[28px] w-[26px] shrink-0 items-center justify-center border border-[#aaa] bg-[#e2e2e0]"><svg width="22" height="22" viewBox="0 0 22 22"><path d="M2 5L6 1L14 9L9 13Z" fill="#f4f4f2" stroke="#999" /><path d="M9 13L14 9L18 13L14 17Z" fill="#999" stroke="#666" /><path d="M17 14L21 20" stroke="#555" strokeWidth="1.800" /></svg></div>
      <span className="ml-[5px] whitespace-nowrap">adminsig</span>
    </div>
  );
}

function StatusBar() {
  const s = "#17549c";
  const icons = [
    <g key="hd"><rect x="2" y="1" width="12" height="14" rx="1.500" fill="#a9d4f5" stroke={s} strokeWidth="1.500" /><circle cx="8" cy="7" r="3.500" fill="#fff" stroke={s} /><path d="M4 13L9 6" stroke={s} strokeWidth="2" /></g>,
    <g key="cd"><circle cx="8" cy="8" r="7" fill="#cfe3f7" stroke="#4d7fb8" /><path d="M8 8L3 3A7 7 0 0 1 8 1Z" fill="#b7e9c0" /><path d="M8 8L13 13A7 7 0 0 0 15 8Z" fill="#c8b5ef" /><circle cx="8" cy="8" r="2.200" fill="#fff" stroke={s} /></g>,
    <g key="net"><rect x="7" y="1.500" width="8" height="6.500" fill="#cfe6fb" stroke={s} strokeWidth="1.300" /><rect x="1" y="6" width="9" height="7" fill="#2e86de" stroke={s} /><path d="M3 14.500H8M10 10H14" stroke="#444" strokeWidth="1.300" /></g>,
    <g key="usb"><path d="M2 14Q3 9 7 6L11 1.500L15 5L11 9Q7 13 2 14Z" fill="#86bdf0" stroke={s} strokeWidth="1.300" /><path d="M1 15L5 11" stroke="#333" strokeWidth="1.500" /></g>,
    <g key="folder"><path d="M1.500 4.500H8L10 2.500H14.500V13.500H1.500Z" fill="#dadada" stroke="#b0b0b0" /></g>,
    <g key="disp"><path d="M1 3L4 1H15.500V10L13 12H1Z" fill="#2e86de" stroke={s} /><path d="M1.500 3H13V12" fill="none" stroke="#bfe0fb" /><path d="M3 14.500H12" stroke="#555" strokeWidth="1.500" /></g>,
    <g key="rec"><rect x="6" y="1" width="9" height="9" fill="#8fb7ef" stroke={s} /><rect x="1" y="5.500" width="9" height="7" fill="#2e6fde" stroke={s} /><path d="M3 14.500H8" stroke="#555" strokeWidth="1.500" /></g>,
    <g key="cpu"><rect x="2.500" y="2.500" width="11" height="11" fill="#dfe3ff" stroke="#3a49b5" strokeWidth="1.600" /><rect x="1" y="1" width="14" height="14" fill="none" stroke="#3a49b5" strokeDasharray="1.500 1.500" /><path d="M6 5V9Q6 11 8 11Q10 11 10 9V5" fill="none" stroke="#3a49b5" strokeWidth="1.300" /></g>,
    <g key="mouse"><circle cx="7.500" cy="7.500" r="6.500" fill="#b5d6f3" stroke={s} /><path d="M3 5Q6 1 9 4L7 8L10 10L8 14Q2 12 3 5Z" fill="#58b83a" /><path d="M9 7L15 9L12 10.500L14 14L12 15.500L10 12L8.500 13.500Z" fill="#3f9a2b" stroke="#fff" strokeWidth="0.800" /></g>,
    <g key="key"><rect x="1" y="1" width="14" height="14" rx="2" fill="#d8f0e8" stroke={s} strokeWidth="1.600" /><path d="M6 3.500H10V7.500H12.700L8 13L3.300 7.500H6Z" fill="#5cc12f" stroke="#1f6e12" /></g>,
  ];
  return (
    <div className="flex h-[22px] items-center bg-[#f1f0ef] pl-[659px]">
      <div className="flex gap-[5px]">{icons.map((ic, i) => <svg key={i} width="16" height="16" viewBox="0 0 16 16">{ic}</svg>)}</div>
      <span className="ml-[6px] whitespace-nowrap font-['Open_Sans'] text-[14.600px] leading-[22px] text-[#4a4a4a]">Maj. droite + Ctrl droite</span>
      <svg width="12" height="12" className="ml-auto self-end"><g fill="#bbb">{[[9, 1], [9, 5], [9, 9], [5, 5], [5, 9], [1, 9]].map((p, i) => <rect key={i} x={p[0]} y={p[1]} width="1.500" height="1.500" />)}</g></svg>
    </div>
  );
}

export default function App() {
  return (
    <div className="h-[834px] w-[1053px] overflow-hidden bg-[#ededeb] font-['Liberation_Sans',sans-serif] leading-normal">
      <TitleBar />
      <div className="flex h-[753px]">
        <Launcher />
        <div className="flex w-[1025px] flex-col">
          <BrowserChrome />
          <AppHeader />
          <div className="flex h-[585px]">
            <div className="w-[30px] shrink-0 bg-[#474747]">
              {SIDE.map((s, i) => (
                <div key={i} className={`flex items-center justify-center ${s.on ? "bg-[#f0f0f0]" : ""} ${s.h === 31 ? "h-[31px]" : s.h === 27 ? "h-[27px]" : "h-[30px]"}`}>
                  <svg width="30" height="30" viewBox="0 0 30 31">{s.svg}</svg>
                </div>
              ))}
            </div>
            <div className="relative h-[585px] w-[995px] overflow-hidden">
              <MapCanvas />
              <LocatePanel />
              <NavBar />
              <Dock />
              <div className="absolute bottom-0 right-[7px] z-20"><Logo3Liz /></div>
              <svg width="14" height="22" viewBox="0 0 14 22" className="absolute left-[339px] top-[484px] z-20"><path d="M1 1V17L5 13.500L8 20L10.500 19L7.800 12.500H12.500Z" fill="#fff" stroke="#000" strokeWidth="1.200" /></svg>
            </div>
          </div>
        </div>
      </div>
      <Taskbar />
      <StatusBar />
    </div>
  );
}
